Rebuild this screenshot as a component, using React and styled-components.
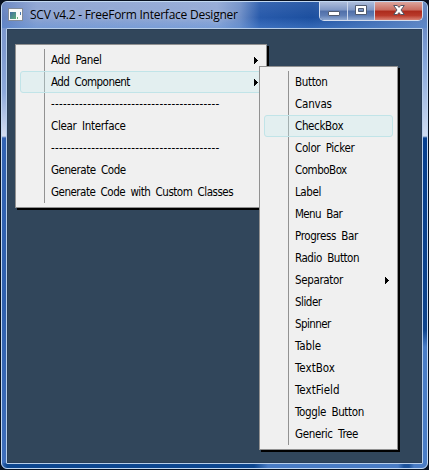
import React from "react";
import styled, { createGlobalStyle } from "styled-components";

const Global = createGlobalStyle`
  * { box-sizing: border-box; }
  html, body { margin: 0; background: #07101f; overflow: hidden; }
`;

const Frame = styled.div`
  width: 429px;
  height: 470px;
  padding: 1px;
  background: #07101f;
`;

const Window = styled.div`
  display: flex;
  flex-direction: column;
  width: 427px;
  height: 468px;
  padding: 0 4px 4px;
  border: 1px solid #c3d9f2;
  border-radius: 6px;
  background:
    linear-gradient(90deg, #3a6bb8 0, #0d468f 5px, #0d468f 252px, #4a7cc4 266px, #4a7cc4 396px, #1c529b 402px, #1c529b 407px, #4a7cc4 412px) 0 bottom / 100% 5px no-repeat,
    linear-gradient(180deg, #7893c8 0, #7f9bd0 50px, #8da9da 90px, #d4def0 134px, #3263b3 136px, #2f60ae 300px, #3f6fbc 466px) 0 0 / 5px 100% no-repeat,
    linear-gradient(180deg, #5878b7 0, #86a6da 60px, #cfdcf1 134px, #063f8f 136px, #0e438b 328px, #4a7dc6 345px) right 0 / 5px 100% no-repeat,
    #3c68b0;
`;

const TitleBar = styled.header`
  display: flex;
  align-items: flex-start;
  height: 26px;
  flex: none;
  margin: 0 -4px;
  padding-left: 6px;
  border-radius: 5px 5px 0 0;
  background:
    linear-gradient(180deg, rgba(255,255,255,.08), rgba(255,255,255,0) 60%, rgba(90,145,220,.4)),
    linear-gradient(90deg, #6482bf 0, #8ba2d1 35px, #91a8d5 215px, #6f8fc7 238px, #285aab 258px, #1c4f9f 310px, #5e82bd 420px);
`;

const AppIcon = styled.svg`
  width: 15px;
  height: 13px;
  margin-top: 6px;
`;

const Title = styled.h1`
  flex: 1;
  margin: 4px 0 0 7px;
  font: 400 12px/18px "Open Sans", sans-serif;
  letter-spacing: -0.25px;
  color: #000;
  white-space: nowrap;
  text-shadow: 0 0 5px rgba(255,255,255,.35);
`;

const Controls = styled.div`
  display: flex;
  width: 104px;
  height: 19px;
  margin-right: 4px;
  border: 1px solid #d4def0;
  border-top: 0;
  border-radius: 0 0 5px 5px;
  overflow: hidden;
`;

const ControlButton = styled.button`
  display: flex;
  align-items: flex-start;
  justify-content: center;
  width: ${(p) => p.$width}px;
  height: 18px;
  padding: ${(p) => p.$drop ?? 3}px 0 0;
  border: 0;
  border-right: ${(p) => (p.$close ? 0 : "1px solid #cbd6ea")};
  background: ${(p) =>
    p.$close
      ? "linear-gradient(180deg, #dca59d 0, #c96c5f 45%, #ac2a1c 50%, #b93a2b 75%, #d98375 100%)"
      : "linear-gradient(180deg, #adbddb 0, #7f97c4 45%, #506fa9 50%, #5f7eb5 75%, #91aad2 100%)"};

  svg { display: block; }
`;

const Client = styled.main`
  flex: 1;
  position: relative;
  border: 1px solid #b7cee9;
  border-radius: 1px;
  background: #31465b;
  box-shadow: inset 0 0 0 1px #293e58;
`;

const Menu = styled.nav`
  position: absolute;
  left: ${(p) => p.$left}px;
  top: ${(p) => p.$top}px;
  width: ${(p) => p.$width}px;
  padding: 4px;
  border: 1px solid #919191;
  background: linear-gradient(#929292, #929292) 28px 4px / 1px calc(100% - 8px) no-repeat #f0f0f0;
  box-shadow: 2px 2px 0 #000;
`;

const Item = styled.div`
  display: flex;
  align-items: center;
  justify-content: space-between;
  height: 22px;
  padding: 0 3px 0 30px;
  border: 1px solid ${(p) => (p.$active ? "#c1e4e8" : "transparent")};
  border-radius: 3px;
  background: ${(p) => (p.$active ? "rgba(200, 235, 238, .32)" : "transparent")};
  color: #000;
  font: 400 11.5px/20px "DejaVu Sans Condensed", "DejaVu Sans", sans-serif;
  font-stretch: condensed;
  letter-spacing: ${(p) => p.$spacing ?? -0.35}px;
  word-spacing: 2.5px;
  white-space: nowrap;
`;

const Arrow = () => (
  <svg width="4" height="7" viewBox="0 0 4 7" shapeRendering="crispEdges">
    <path d="M0 0h1v1h1v1h1v1h1v1H3v1H2v1H1v1H0z" />
  </svg>
);

const DASHES = "-".repeat(42);
const mainItems = [
  { label: "Add Panel", sub: true, spacing: -0.35 },
  { label: "Add Component", sub: true, active: true, spacing: -0.55 },
  { label: DASHES, spacing: 0.28 },
  { label: "Clear Interface", spacing: -0.3 },
  { label: DASHES, spacing: 0.28 },
  { label: "Generate Code", spacing: -0.45 },
  { label: "Generate Code with Custom Classes", spacing: -0.5 },
];
const componentItems = [
  { label: "Button" },
  { label: "Canvas", spacing: -0.2 },
  { label: "CheckBox", active: true },
  { label: "Color Picker" },
  { label: "ComboBox", spacing: -0.5 },
  { label: "Label", spacing: -0.4 },
  { label: "Menu Bar", spacing: -0.6 },
  { label: "Progress Bar", spacing: -0.4 },
  { label: "Radio Button", spacing: -0.45 },
  { label: "Separator", sub: true },
  { label: "Slider", spacing: -0.5 },
  { label: "Spinner", spacing: -0.6 },
  { label: "Table", spacing: -0.1 },
  { label: "TextBox", spacing: 0 },
  { label: "TextField", spacing: 0 },
  { label: "Toggle Button" },
  { label: "Generic Tree" },
];

const MenuList = ({ items, ...place }) => (
  <Menu {...place}>
    {items.map((it, i) => (
      <Item key={i} $active={it.active} $spacing={it.spacing}>
        <span>{it.label}</span>
        {it.sub && <Arrow />}
      </Item>
    ))}
  </Menu>
);

export default function App() {
  return (
    <>
      <Global />
      <Frame>
        <Window>
          <TitleBar>
            <AppIcon viewBox="0 0 15 13" shapeRendering="crispEdges">
              <defs>
                <linearGradient id="screen" x2="1" y2="1">
                  <stop stopColor="#416da3" />
                  <stop offset="1" stopColor="#5cad78" />
                </linearGradient>
              </defs>
              <path fill="#828b98" d="M0 0h15v13H0z" />
              <path fill="#fafafa" d="M1 1h13v11H1z" />
              <path fill="url(#screen)" d="M2 4h6v7H2z" />
              <path fill="#4a7ab2" d="M12 4h1v3h-1z" />
              <path fill="#69b47c" d="M9 9h1v2H9z" />
            </AppIcon>
            <Title>SCV v4.2 - FreeForm Interface Designer</Title>
            <Controls>
              <ControlButton $width={28} $drop={9} aria-label="Minimize">
                <svg width="12" height="6" viewBox="0 0 12 6">
                  <rect x=".5" y=".5" width="11" height="4" rx=".5" fill="#fff" stroke="#505b70" />
                </svg>
              </ControlButton>
              <ControlButton $width={27} aria-label="Maximize">
                <svg width="12" height="10" viewBox="0 0 12 10">
                  <path d="M.5.5h11v9H.5zM3.5 3.5v3h5v-3z" fill="#fff" fillRule="evenodd" stroke="#505b70" />
                </svg>
              </ControlButton>
              <ControlButton $width={47} $close aria-label="Close">
                <svg width="12" height="10" viewBox="0 0 12 10">
                  <path d="M.7.5h3.6L6 2.4 7.7.5h3.6L8 5l3.3 4.5H7.7L6 7.6 4.3 9.5H.7L4 5z" fill="#fff" stroke="#535666" />
                </svg>
              </ControlButton>
            </Controls>
          </TitleBar>
          <Client>
            <MenuList items={mainItems} $left={8} $top={15} $width={252} />
            <MenuList items={componentItems} $left={252} $top={37} $width={139} />
          </Client>
        </Window>
      </Frame>
    </>
  );
}
